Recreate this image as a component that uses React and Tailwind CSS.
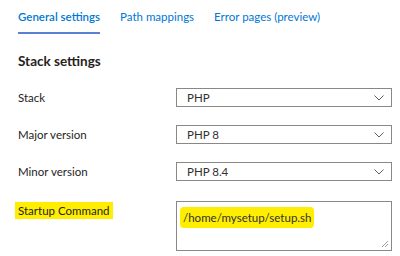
import React from "react";

function Chevron() {
  return (
    <svg width="10" height="6" viewBox="0 0 10 6" fill="none" className="shrink-0">
      <path d="M0.5 0.5 L5 5 L9.5 0.5" stroke="#605e5c" strokeWidth="1" />
    </svg>
  );
}

function SelectRow({ label, value }) {
  return (
    <div className="flex items-center h-[19px]">
      <div className="w-[158px] text-[11.5px] text-[#252423]">{label}</div>
      <div className="w-[216px] h-[19px] border border-[#8a8886] flex items-center justify-between pl-[10px] pr-[7px] text-[11.5px] text-[#323130]">
        <span>{value}</span>
        <Chevron />
      </div>
    </div>
  );
}

export default function App() {
  return (
    <div className="w-[400px] h-[256px] bg-white overflow-hidden" style={{ fontFamily: 'Lato, "Noto Sans", sans-serif' }}>
      <div className="flex pl-[18px] pt-[9px] gap-[20px] text-[11.5px] text-[#0078d4]">
        <div className="flex flex-col">
          <span className="font-semibold leading-[16px]">General settings</span>
          <div className="h-[2px] bg-[#5b7fd6] mt-[7px]" />
        </div>
        <span className="leading-[16px]">Path mappings</span>
        <span className="leading-[16px]">Error pages (preview)</span>
      </div>
      <div className="pl-[18px] pt-[19px]">
        <div className="text-[13.5px] font-bold text-[#252423] leading-[16px]">Stack settings</div>
        <div className="flex flex-col gap-[18px] mt-[19px]">
          <SelectRow label="Stack" value="PHP" />
          <SelectRow label="Major version" value="PHP 8" />
          <SelectRow label="Minor version" value="PHP 8.4" />
        </div>
        <div className="flex mt-[20px]">
          <div className="w-[158px] text-[11.5px] text-[#252423] pt-[1px]">
            <span className="bg-[#ffee00] px-[3px] -ml-[3px] py-[2px]">Startup Command</span>
          </div>
          <div className="w-[216px] h-[50px] border border-[#8a8886] relative px-[3px] pt-[7px] text-[11.5px] text-[#323130]">
            <span className="bg-[#ffee00] py-[4px] px-[3px] rounded-[4px]">/home/mysetup/setup.sh</span>
            <svg width="8" height="8" viewBox="0 0 8 8" className="absolute right-[2px] bottom-[2px]">
              <path d="M7 1 L1 7 M7 4 L4 7" stroke="#a19f9d" strokeWidth="1" />
            </svg>
          </div>
        </div>
      </div>
    </div>
  );
}
